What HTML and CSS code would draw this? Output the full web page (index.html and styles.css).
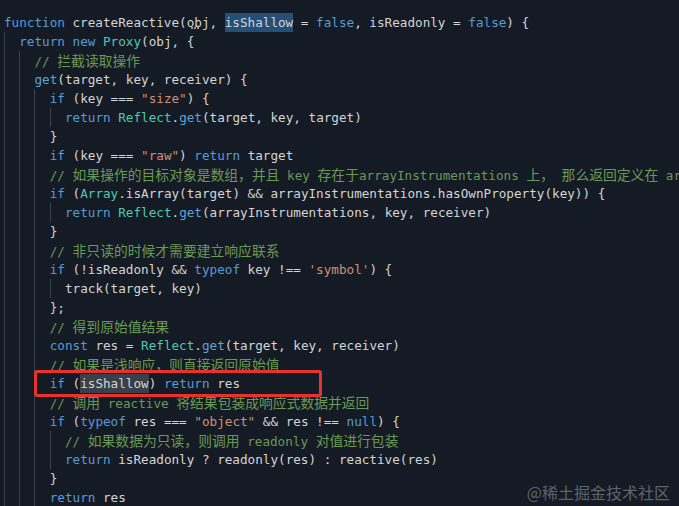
FILE: index.html
```html
<!DOCTYPE html>
<html lang="zh">
<head>
<meta charset="utf-8">
<title>createReactive</title>
<link rel="stylesheet" href="styles.css">
</head>
<body>
<div class="editor">
<div class="code">
<div class="ln"><span class="k">function</span> createReactive(<span class="hint">ob</span>j, <span class="sel">isShallow</span> = <span class="k">false</span>, isReadonly = <span class="k">false</span>) {</div>
<div class="ln"><span class="ig">  </span><span class="k">return</span> <span class="k">new</span> <span class="t">Proxy</span>(obj, {</div>
<div class="ln"><span class="ig">  </span><span class="ig">  </span><span class="c">// <span class="z">拦截读取操作</span></span></div>
<div class="ln"><span class="ig">  </span><span class="ig">  </span><span class="f">get</span>(target, key, receiver) {</div>
<div class="ln"><span class="ig">  </span><span class="ig">  </span><span class="ig">  </span><span class="k">if</span> (key === <span class="s">"size"</span>) {</div>
<div class="ln"><span class="ig">  </span><span class="ig">  </span><span class="ig">  </span><span class="ig">  </span><span class="k">return</span> <span class="t">Reflect</span>.<span class="f">get</span>(target, key, target)</div>
<div class="ln"><span class="ig">  </span><span class="ig">  </span><span class="ig">  </span>}</div>
<div class="ln"><span class="ig">  </span><span class="ig">  </span><span class="ig">  </span><span class="k">if</span> (key === <span class="s">"raw"</span>) <span class="k">return</span> target</div>
<div class="ln"><span class="ig">  </span><span class="ig">  </span><span class="ig">  </span><span class="c">// <span class="z">如果操作的目标对象是数组，并且</span> key <span class="z">存在于</span>arrayInstrumentations <span class="z">上，</span> <span class="z">那么返回定义在</span> arrayInstrumentations <span class="z">上的值</span></span></div>
<div class="ln"><span class="ig">  </span><span class="ig">  </span><span class="ig">  </span><span class="k">if</span> (<span class="t">Array</span>.isArray(target) &amp;&amp; arrayInstrumentations.hasOwnProperty(key)) {</div>
<div class="ln"><span class="ig">  </span><span class="ig">  </span><span class="ig">  </span><span class="ig">  </span><span class="k">return</span> <span class="t">Reflect</span>.<span class="f">get</span>(arrayInstrumentations, key, receiver)</div>
<div class="ln"><span class="ig">  </span><span class="ig">  </span><span class="ig">  </span>}</div>
<div class="ln"><span class="ig">  </span><span class="ig">  </span><span class="ig">  </span><span class="c">// <span class="z">非只读的时候才需要建立响应联系</span></span></div>
<div class="ln"><span class="ig">  </span><span class="ig">  </span><span class="ig">  </span><span class="k">if</span> (!isReadonly &amp;&amp; <span class="k">typeof</span> key !== <span class="s">'symbol'</span>) {</div>
<div class="ln"><span class="ig">  </span><span class="ig">  </span><span class="ig">  </span><span class="ig">  </span>track(target, key)</div>
<div class="ln"><span class="ig">  </span><span class="ig">  </span><span class="ig">  </span>};</div>
<div class="ln"><span class="ig">  </span><span class="ig">  </span><span class="ig">  </span><span class="c">// <span class="z">得到原始值结果</span></span></div>
<div class="ln"><span class="ig">  </span><span class="ig">  </span><span class="ig">  </span><span class="k">const</span> res = <span class="t">Reflect</span>.<span class="f">get</span>(target, key, receiver)</div>
<div class="ln"><span class="ig">  </span><span class="ig">  </span><span class="ig">  </span><span class="c">// <span class="z">如果是浅响应，则直接返回原始值</span></span></div>
<div class="ln"><span class="ig">  </span><span class="ig">  </span><span class="ig">  </span><span class="k">if</span> (<span class="occ">isShallow</span>) <span class="k">return</span> res</div>
<div class="ln"><span class="ig">  </span><span class="ig">  </span><span class="ig">  </span><span class="c">// <span class="z">调用</span> reactive <span class="z">将结果包装成响应式数据并返回</span></span></div>
<div class="ln"><span class="ig">  </span><span class="ig">  </span><span class="ig">  </span><span class="k">if</span> (<span class="k">typeof</span> res === <span class="s">"object"</span> &amp;&amp; res !== <span class="k">null</span>) {</div>
<div class="ln"><span class="ig">  </span><span class="ig">  </span><span class="ig">  </span><span class="ig">  </span><span class="c">// <span class="z">如果数据为只读，则调用</span> readonly <span class="z">对值进行包装</span></span></div>
<div class="ln"><span class="ig">  </span><span class="ig">  </span><span class="ig">  </span><span class="ig">  </span><span class="k">return</span> isReadonly ? readonly(res) : reactive(res)</div>
<div class="ln"><span class="ig">  </span><span class="ig">  </span><span class="ig">  </span>}</div>
<div class="ln"><span class="ig">  </span><span class="ig">  </span><span class="ig">  </span><span class="k">return</span> res</div>
</div>
<div class="mark"></div>
<div class="watermark">@稀土掘金技术社区</div>
</div>
</body>
</html>
```
FILE: styles.css
```css
html, body {
  margin: 0;
  padding: 0;
  background: #151b25;
}
.editor {
  position: relative;
  width: 679px;
  height: 506px;
  overflow: hidden;
  background: #151b25;
}
.code {
  padding: 13px 0 0 4px;
  font-family: "DejaVu Sans Mono", "Noto Sans CJK SC", monospace;
  font-size: 12.65px;
  line-height: 19px;
  color: #d4d4d4;
}
.ln {
  height: 19px;
  white-space: pre;
}
.ig {
  display: inline-block;
  height: 19px;
  vertical-align: top;
  box-shadow: inset 1px 0 0 #3c424d;
}
.k { color: #569cd6; }
.f { color: #5ea2dc; }
.t { color: #4ec9b0; }
.s { color: #ce9178; }
.c { color: #6a9955; }
.z {
  font-family: "Noto Sans CJK SC", sans-serif;
  font-size: 13.8px;
  line-height: 19px;
}
.sel {
  background: #264f78;
  display: inline-block;
  height: 19px;
  vertical-align: top;
}
.occ {
  background: #3a4049;
  display: inline-block;
  height: 19px;
  vertical-align: top;
}
.hint {
  position: relative;
}
.hint::after {
  content: "";
  position: absolute;
  left: 4px;
  width: 8px;
  bottom: 1px;
  border-top: 2px dotted #9a9a9a;
}
.mark {
  position: absolute;
  left: 34px;
  top: 370px;
  width: 288px;
  height: 27px;
  box-sizing: border-box;
  border: 3px solid #e8322e;
  border-radius: 3px;
}
.watermark {
  position: absolute;
  right: 9px;
  bottom: 3px;
  font-family: "Noto Sans CJK SC", sans-serif;
  font-size: 16px;
  line-height: 22px;
  color: #5e636b;
}
```
